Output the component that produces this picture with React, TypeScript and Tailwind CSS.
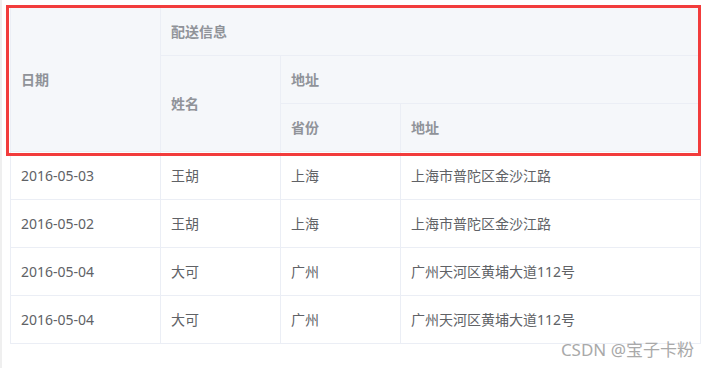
import React from "react";

const rows = [
  { date: "2016-05-03", name: "王胡", province: "上海", address: "上海市普陀区金沙江路" },
  { date: "2016-05-02", name: "王胡", province: "上海", address: "上海市普陀区金沙江路" },
  { date: "2016-05-04", name: "大可", province: "广州", address: "广州天河区黄埔大道112号" },
  { date: "2016-05-04", name: "大可", province: "广州", address: "广州天河区黄埔大道112号" },
];

const th = "border border-[#ebeef5] bg-[#f5f7fa] px-[10px] py-3 text-left align-middle text-[14px] font-bold leading-[23px] text-[#909399]";
const td = "border border-[#ebeef5] px-[10px] py-3 text-left align-middle text-[14px] leading-[23px] text-[#606266]";

function App() {
  return (
    <div
      className="relative flex h-[368px] w-[709px] overflow-hidden bg-white"
      style={{ fontFamily: '"Noto Sans", "Noto Sans CJK SC", sans-serif' }}
    >
      <div className="h-full w-[2px] bg-[#efefef]" />
      <div className="pl-[8px] pt-[7px]">
        <table className="w-[691px] table-fixed border-collapse">
          <colgroup>
            <col className="w-[150px]" />
            <col className="w-[120px]" />
            <col className="w-[120px]" />
            <col />
          </colgroup>
          <thead>
            <tr>
              <th rowSpan={3} className={th}>日期</th>
              <th colSpan={3} className={th}>配送信息</th>
            </tr>
            <tr>
              <th rowSpan={2} className={th}>姓名</th>
              <th colSpan={2} className={th}>地址</th>
            </tr>
            <tr>
              <th className={th}>省份</th>
              <th className={th}>地址</th>
            </tr>
          </thead>
          <tbody>
            {rows.map((r, i) => (
              <tr key={i}>
                <td className={td}>{r.date}</td>
                <td className={td}>{r.name}</td>
                <td className={td}>{r.province}</td>
                <td className={td}>{r.address}</td>
              </tr>
            ))}
          </tbody>
        </table>
      </div>

      {/* red highlight annotation */}
      <div className="pointer-events-none absolute left-[6px] top-[5px] h-[151px] w-[695px] border-[3px] border-[#f23c3c]" />

      {/* watermark */}
      <div className="absolute right-[15px] top-[338px] text-[17px] leading-[24px] text-[#a9a9a9]">
        CSDN @宝子卡粉
      </div>
    </div>
  );
}

export default App;
